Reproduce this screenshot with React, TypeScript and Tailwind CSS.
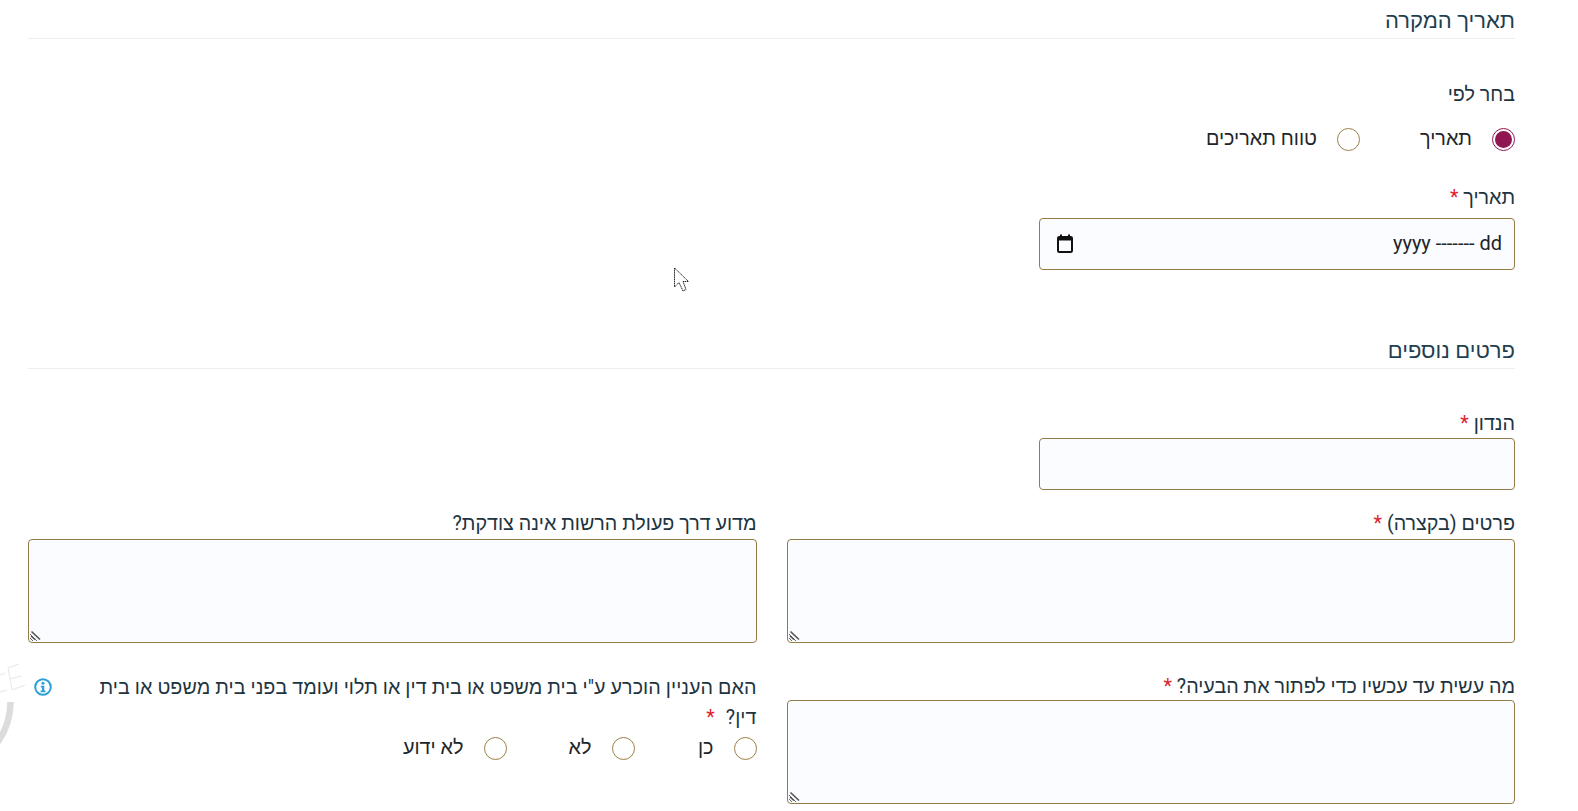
export default function App() {
  const border = "border border-[#957b45] rounded-[4px] bg-[#fbfcff]";
  const Req = ({ cls = "" }: { cls?: string }) => <span className={`text-[#e0212e] ${cls}`}>*</span>;
  const Label = ({ children, cls = "" }: { children: React.ReactNode; cls?: string }) => (
    <label className={`block text-[19.7px] leading-[30px] text-[#1e3440] ${cls}`}>{children}</label>
  );
  const Radio = ({ label, checked = false, cls = "" }: { label: string; checked?: boolean; cls?: string }) => (
    <span className={`flex items-center ${cls}`}>
      <span className={`w-[23px] h-[23px] shrink-0 rounded-full border-[1.5px] flex items-center justify-center ${checked ? "border-[#8f1650]" : "border-[#9a8048]"}`}>
        {checked && <span className="block w-[17px] h-[17px] rounded-full bg-[#8f1650]" />}
      </span>
      <span className="mr-5 text-[19.8px] leading-[30px] text-[#212529]">{label}</span>
    </span>
  );
  const TA = () => (
    <div className="relative">
      <textarea className={`${border} block w-full h-[104px] outline-none`} />
      <svg className="absolute left-[2px] bottom-[2px] pointer-events-none" width="11" height="11" viewBox="0 0 11 11" fill="none">
        <path d="M1.500 1.500 L10 9.500" stroke="#555" strokeWidth="1.600" />
        <path d="M1 6 L5 9.500" stroke="#555" strokeWidth="1.600" />
      </svg>
    </div>
  );
  return (
    <div dir="rtl" className="relative h-[811px] w-[1578px] overflow-hidden bg-white font-['Roboto','Noto_Sans',sans-serif]">
      <svg className="absolute left-0 top-[650px]" width="30" height="100" viewBox="0 0 30 100" fill="none">
        <path d="M10.500 52 C10.500 66 6 80 -2 92" stroke="#dcdcdc" strokeWidth="6.500" />
        <path d="M19 14 L8 18 L12 40 L25 35 M10 29 L21 26" stroke="#e6e6e6" strokeWidth="1" />
        <path d="M0 25 L5 23 M0 42 L7 40" stroke="#e6e6e6" strokeWidth="1" />
      </svg>
      <svg className="absolute left-[673px] top-[266px]" width="17" height="27" viewBox="0 0 17 27" fill="none">
        <path d="M1.5 2 V21 L6 16.5 L10 25 L13 23.500 L10 15.500 H15.500 Z" fill="#fff" stroke="#222" strokeWidth="1" strokeDasharray="1.500 0.600" />
      </svg>

      <div className="pr-[63px] pl-[28px]">
        <section className="h-[39px] border-b border-[#eceeef] pt-[5px]">
          <h2 className="text-[22px] leading-[32px] text-[#1f3f50]">תאריך המקרה</h2>
        </section>

        <Label cls="mt-[41px]">בחר לפי</Label>
        <div className="mt-[14px] flex h-[30px]">
          <Radio label="תאריך" checked cls="w-[104px]" />
          <Radio label="טווח תאריכים" cls="mr-[51px]" />
        </div>
        <Label cls="mt-[29px]">תאריך <Req /></Label>
        <div className={`${border} mt-[5px] flex h-[52px] w-[476px] items-center justify-between pr-[12px] pl-[17px] pb-[2px]`}>
          <span dir="ltr" className="text-[20px] text-[#212529]">yyyy ------- dd</span>
          <svg width="16" height="19" viewBox="0 0 16 19" fill="none">
            <rect x="1" y="3" width="14" height="15" rx="1.200" stroke="#111" strokeWidth="2" />
            <rect x="1" y="3" width="14" height="3.500" fill="#111" />
            <path d="M4 0.500V3M12 0.500V3" stroke="#111" strokeWidth="2" />
          </svg>
        </div>

        <section className="mt-[64px] h-[35px] border-b border-[#eceeef] pt-[1px]">
          <h2 className="text-[22px] leading-[32px] text-[#1f3f50]">פרטים נוספים</h2>
        </section>

        <Label cls="mt-[40px] h-[29px]">הנדון <Req /></Label>
        <input className={`${border} block h-[52px] w-[476px] outline-none`} />

        <div className="mt-[19px] grid grid-cols-2 gap-x-[30px]">
          <div>
            <Label>פרטים (בקצרה) <Req /></Label>
            <TA />
          </div>
          <div>
            <Label>מדוע דרך פעולת הרשות אינה צודקת?</Label>
            <TA />
          </div>
          <div className="mt-[29px]">
            <Label cls="h-[28px]">מה עשית עד עכשיו כדי לפתור את הבעיה? <Req /></Label>
            <TA />
          </div>
          <div className="mt-[30px] relative">
            <Label cls="pl-[66px] tracking-[0.07px]">האם העניין הוכרע ע"י בית משפט או בית דין או תלוי ועומד בפני בית משפט או בית דין? <Req cls="mr-[6px]" /></Label>
            <svg className="absolute left-[6px] top-[5px]" width="18" height="18" viewBox="0 0 18 18" fill="none">
              <circle cx="9" cy="9" r="7.800" stroke="#2f9fd8" strokeWidth="2" />
              <circle cx="9" cy="5.300" r="1.500" fill="#2f9fd8" />
              <path d="M6.800 7.800h3.500v4.700h1.200V14.200H6.600v-1.700H8V9.500H6.800z" fill="#2f9fd8" />
            </svg>
            <div className="flex h-[30px]">
              <Radio label="כן" cls="w-[122px]" />
              <Radio label="לא" cls="w-[128px]" />
              <Radio label="לא ידוע" />
            </div>
          </div>
        </div>
      </div>
    </div>
  );
}
